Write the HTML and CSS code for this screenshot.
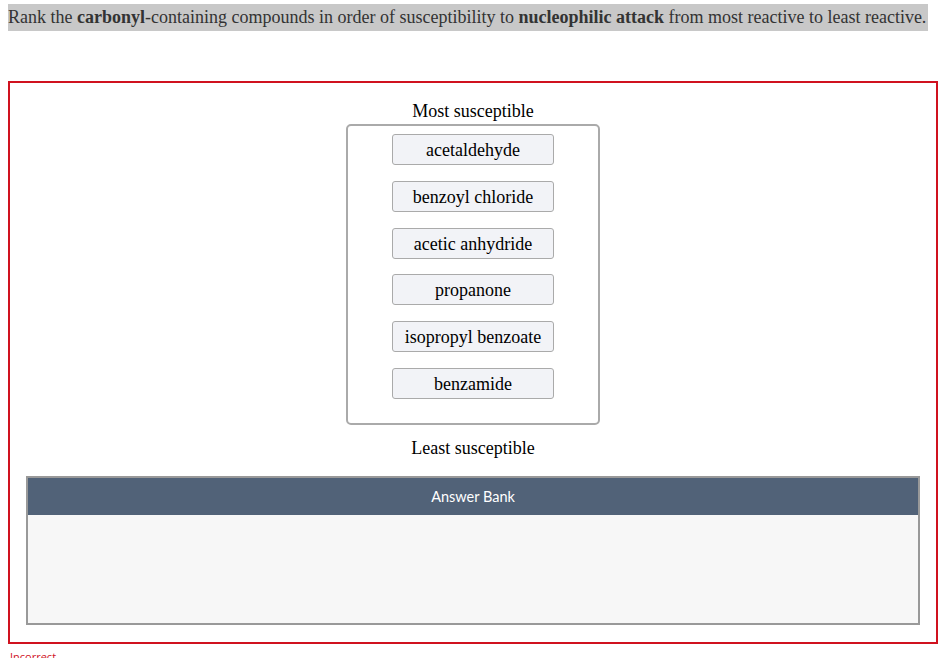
FILE: index.html
```html
<!DOCTYPE html>
<html lang="en">
<head>
    <meta charset="UTF-8">
    <meta name="viewport" content="width=device-width, initial-scale=1.0">
    <title>Ranking</title>
    <link rel="stylesheet" href="styles.css">
</head>
<body>
    <div class="question">
        <span class="question-text">Rank the <b>carbonyl</b>-containing compounds in order of susceptibility to <b>nucleophilic attack</b> from most reactive to least reactive.</span>
    </div>
    <div class="ranking-box">
        <div class="rank-label">Most susceptible</div>
        <div class="rank-list">
            <div class="rank-item">acetaldehyde</div>
            <div class="rank-item">benzoyl chloride</div>
            <div class="rank-item">acetic anhydride</div>
            <div class="rank-item">propanone</div>
            <div class="rank-item">isopropyl benzoate</div>
            <div class="rank-item">benzamide</div>
        </div>
        <div class="rank-label least">Least susceptible</div>
        <div class="answer-bank">
            <div class="bank-header">Answer Bank</div>
            <div class="bank-body"></div>
        </div>
    </div>
    <div class="status">Incorrect</div>
</body>
</html>
```

FILE: styles.css
```css
body {
    margin: 0;
    padding: 4px 4px 0 8px;
    font-family: "Liberation Serif", "Times New Roman", serif;
    background-color: #fff;
    color: #111;
}
.question {
    height: 27px;
}
.question-text {
    display: inline-block;
    background-color: #c8c8c8;
    color: #333;
    font-size: 18px;
    line-height: 27px;
    padding-right: 2px;
    white-space: nowrap;
}
.ranking-box {
    margin-top: 50px;
    border: 2px solid #d0121f;
    padding: 18px 16px 17px;
    display: flex;
    flex-direction: column;
    align-items: center;
}
.rank-label {
    font-size: 18px;
    line-height: 20px;
    color: #000;
}
.rank-label.least {
    margin-top: 13px;
}
.rank-list {
    margin-top: 3px;
    width: 250px;
    border: 2px solid #aaa;
    border-radius: 5px;
    padding: 8px 0 24px;
    display: flex;
    flex-direction: column;
    align-items: center;
    gap: 15.8px;
}
.rank-item {
    width: 160px;
    height: 29px;
    line-height: 31px;
    text-align: center;
    font-size: 18px;
    color: #000;
    background-color: #f2f3f7;
    border: 1px solid #aaa;
    border-radius: 3px;
}
.answer-bank {
    align-self: stretch;
    margin-top: 18px;
    border: 2px solid #999;
}
.bank-header {
    height: 37px;
    line-height: 37px;
    background-color: #516278;
    color: #fff;
    text-align: center;
    font-family: Lato, "Open Sans", sans-serif;
    font-size: 14.5px;
}
.bank-body {
    height: 108px;
    background-color: #f7f7f7;
}
.status {
    margin: 6px 0 0 2px;
    font-family: "Open Sans", sans-serif;
    font-size: 11px;
    line-height: 14px;
    color: #d0121f;
}
```
